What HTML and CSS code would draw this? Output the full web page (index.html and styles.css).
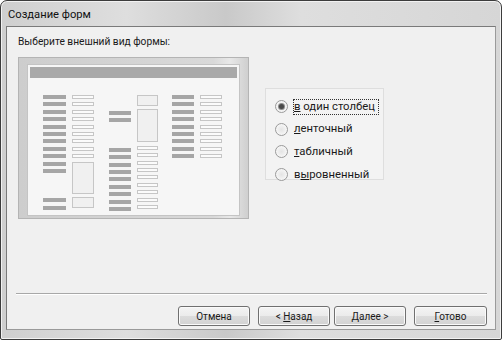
FILE: index.html
```html
<!DOCTYPE html>
<html lang="ru">
<head>
<meta charset="utf-8">
<link rel="stylesheet" href="styles.css">
</head>
<body>
<div class="window">
  <div class="titlebar">Создание форм</div>
  <div class="client">
    <div class="prompt">Выберите внешний вид формы:</div>
    <div class="main">
      <div class="preview">
        <div class="sheet">
          <div class="sheet-title"></div>
          <div class="cols">
            <div class="col lab c1">
              <i></i><i></i><i></i><i></i><i></i><i></i><i></i><i></i><i></i><i></i><i></i>
              <i class="gap25"></i><i></i>
            </div>
            <div class="col fld c2">
              <i></i><i></i><i></i><i></i><i></i><i></i><i></i><i></i><i></i>
              <i class="big32"></i><i class="box11"></i>
            </div>
            <div class="col lab c3">
              <i class="top16"></i><i></i>
              <i class="gap25"></i><i></i><i></i><i></i><i></i><i></i><i></i><i></i><i></i>
            </div>
            <div class="col fld c4">
              <i class="box11"></i><i class="big33"></i>
              <i></i><i></i><i></i><i></i><i></i><i></i><i></i><i></i><i></i>
            </div>
            <div class="col lab c5">
              <i></i><i></i><i></i><i></i><i></i><i></i><i></i><i></i><i></i>
            </div>
            <div class="col fld c6">
              <i></i><i></i><i></i><i></i><i></i><i></i><i></i><i></i><i></i>
            </div>
          </div>
        </div>
      </div>
      <div class="options">
        <label class="opt"><span class="radio checked"></span><span class="txt focus"><u>в</u> один столбец</span></label>
        <label class="opt"><span class="radio"></span><span class="txt"><u>л</u>енточный</span></label>
        <label class="opt"><span class="radio"></span><span class="txt"><u>т</u>абличный</span></label>
        <label class="opt"><span class="radio"></span><span class="txt">в<u>ы</u>ровненный</span></label>
      </div>
    </div>
    <div class="separator"></div>
    <div class="buttons">
      <button class="btn">Отмена</button>
      <button class="btn back">&lt; <u>Н</u>азад</button>
      <button class="btn next"><u>Д</u>алее &gt;</button>
      <button class="btn done"><u>Г</u>отово</button>
    </div>
  </div>
</div>
</body>
</html>
```

FILE: styles.css
```css
* { box-sizing: border-box; }
html, body { margin: 0; padding: 0; background: #fff; }
body { font-family: Roboto, "Noto Sans", "Liberation Sans", sans-serif; font-size: 11px; color: #1a1a1a; }

.window {
  width: 502px; height: 340px;
  border: 1px solid #3c3c3c;
  border-radius: 7px 7px 2px 2px;
  background: linear-gradient(90deg, #cfcfcf 0%, #dedede 25%, #c9c9c9 45%, #dedede 60%, #d6d6d6 100%);
  display: flex; flex-direction: column;
  padding: 0 5px 9px 5px;
  box-shadow: inset 0 0 0 1px #f2f2f2;
}
.titlebar {
  height: 25px; flex: none;
  padding-left: 2px;
  font-size: 11.2px; line-height: 27px; color: #111;
}
.client {
  flex: 1;
  background: #f0f0f0;
  border: 1px solid #7a7a7a;
  border-right-color: #9a9a9a; border-bottom-color: #9a9a9a;
  display: flex; flex-direction: column;
  padding: 0 8px 0 11px;
}
.prompt { margin-top: 8px; height: 14px; line-height: 14px; font-size: 10.2px; }
.main { display: flex; margin-top: 8px; }

.preview {
  width: 231px; height: 162px; flex: none;
  border: 1px solid #b4b4b4;
  background: linear-gradient(90deg, #cdcdcd 0%, #d9d9d9 85%, #e8e8e8 92%, #cfcfcf 100%);
  padding: 6px 8px 2px 8px;
}
.sheet {
  width: 213px; height: 152px;
  background: #f6f6f6;
  border: 1px solid #c4c4c4;
  padding: 2px;
}
.sheet-title { height: 11px; background: #a9a9a9; }
.cols { display: flex; padding: 17px 0 0 13px; }
.col { display: flex; flex-direction: column; gap: 3.4px; }
.col i { display: block; height: 4px; }
.lab i { background: #a6a6a6; }
.fld i { background: #fbfbfb; border: 1px solid #c6c6c6; height: 4px; }
.c1 { width: 23px; }
.c2 { width: 22px; margin-left: 6px; }
.c3 { width: 22px; margin-left: 15px; }
.c4 { width: 21px; margin-left: 6px; }
.c5 { width: 22px; margin-left: 14px; }
.c6 { width: 22px; margin-left: 6px; }
.col i.gap25 { margin-top: 22px; }
.col i.top16 { margin-top: 16px; }
.fld i.big32 { height: 32px; background: #f0f0f0; }
.fld i.big33 { height: 33px; background: #f0f0f0; }
.fld i.box11 { height: 11px; background: #f0f0f0; }

.options {
  margin: 31px 0 0 16px;
  width: 119px; height: 92px;
  border: 1px solid #dedede;
  background: #f3f3f3;
  display: flex; flex-direction: column;
  padding: 10.5px 0 0 9px; gap: 8.7px;
}
.opt { display: flex; align-items: center; height: 14px; }
.radio {
  width: 13px; height: 13px; flex: none;
  border-radius: 50%;
  border: 1px solid #9a9a9a;
  background: radial-gradient(circle at 50% 50%, #e4e4e4 0%, #f6f6f6 70%);
  margin-right: 6px;
  display: flex; align-items: center; justify-content: center;
}
.radio.checked::after {
  content: ""; width: 5px; height: 5px; border-radius: 50%;
  background: #4a4a4a; box-shadow: 0 0 0 1px #8c8c8c;
}
.txt { font-size: 11.3px; line-height: 14px; padding: 0 2px 0 0; }
.txt.focus { outline: 1px dotted #333; outline-offset: 0; padding-right: 3px; }
u { text-decoration: underline; text-underline-offset: 1px; }

.separator {
  margin-top: auto;
  margin-left: -2px; margin-right: 0;
  height: 2px;
  border-top: 1px solid #a8a8a8; border-bottom: 1px solid #fff;
}
.buttons { display: flex; justify-content: flex-end; padding: 11px 0 3px 0; gap: 8px; }
.btn {
  width: 72px; height: 20px;
  font-family: inherit; font-size: 10px; color: #1a1a1a;
  border: 1px solid #707070; border-radius: 3px;
  background: linear-gradient(#f4f4f4 0%, #ebebeb 50%, #dcdcdc 51%, #d2d2d2 100%);
  box-shadow: inset 0 0 0 1px #fafafa;
  padding: 0;
}
.btn.next { margin-left: -4px; }
.btn.done { width: 73px; }
```
